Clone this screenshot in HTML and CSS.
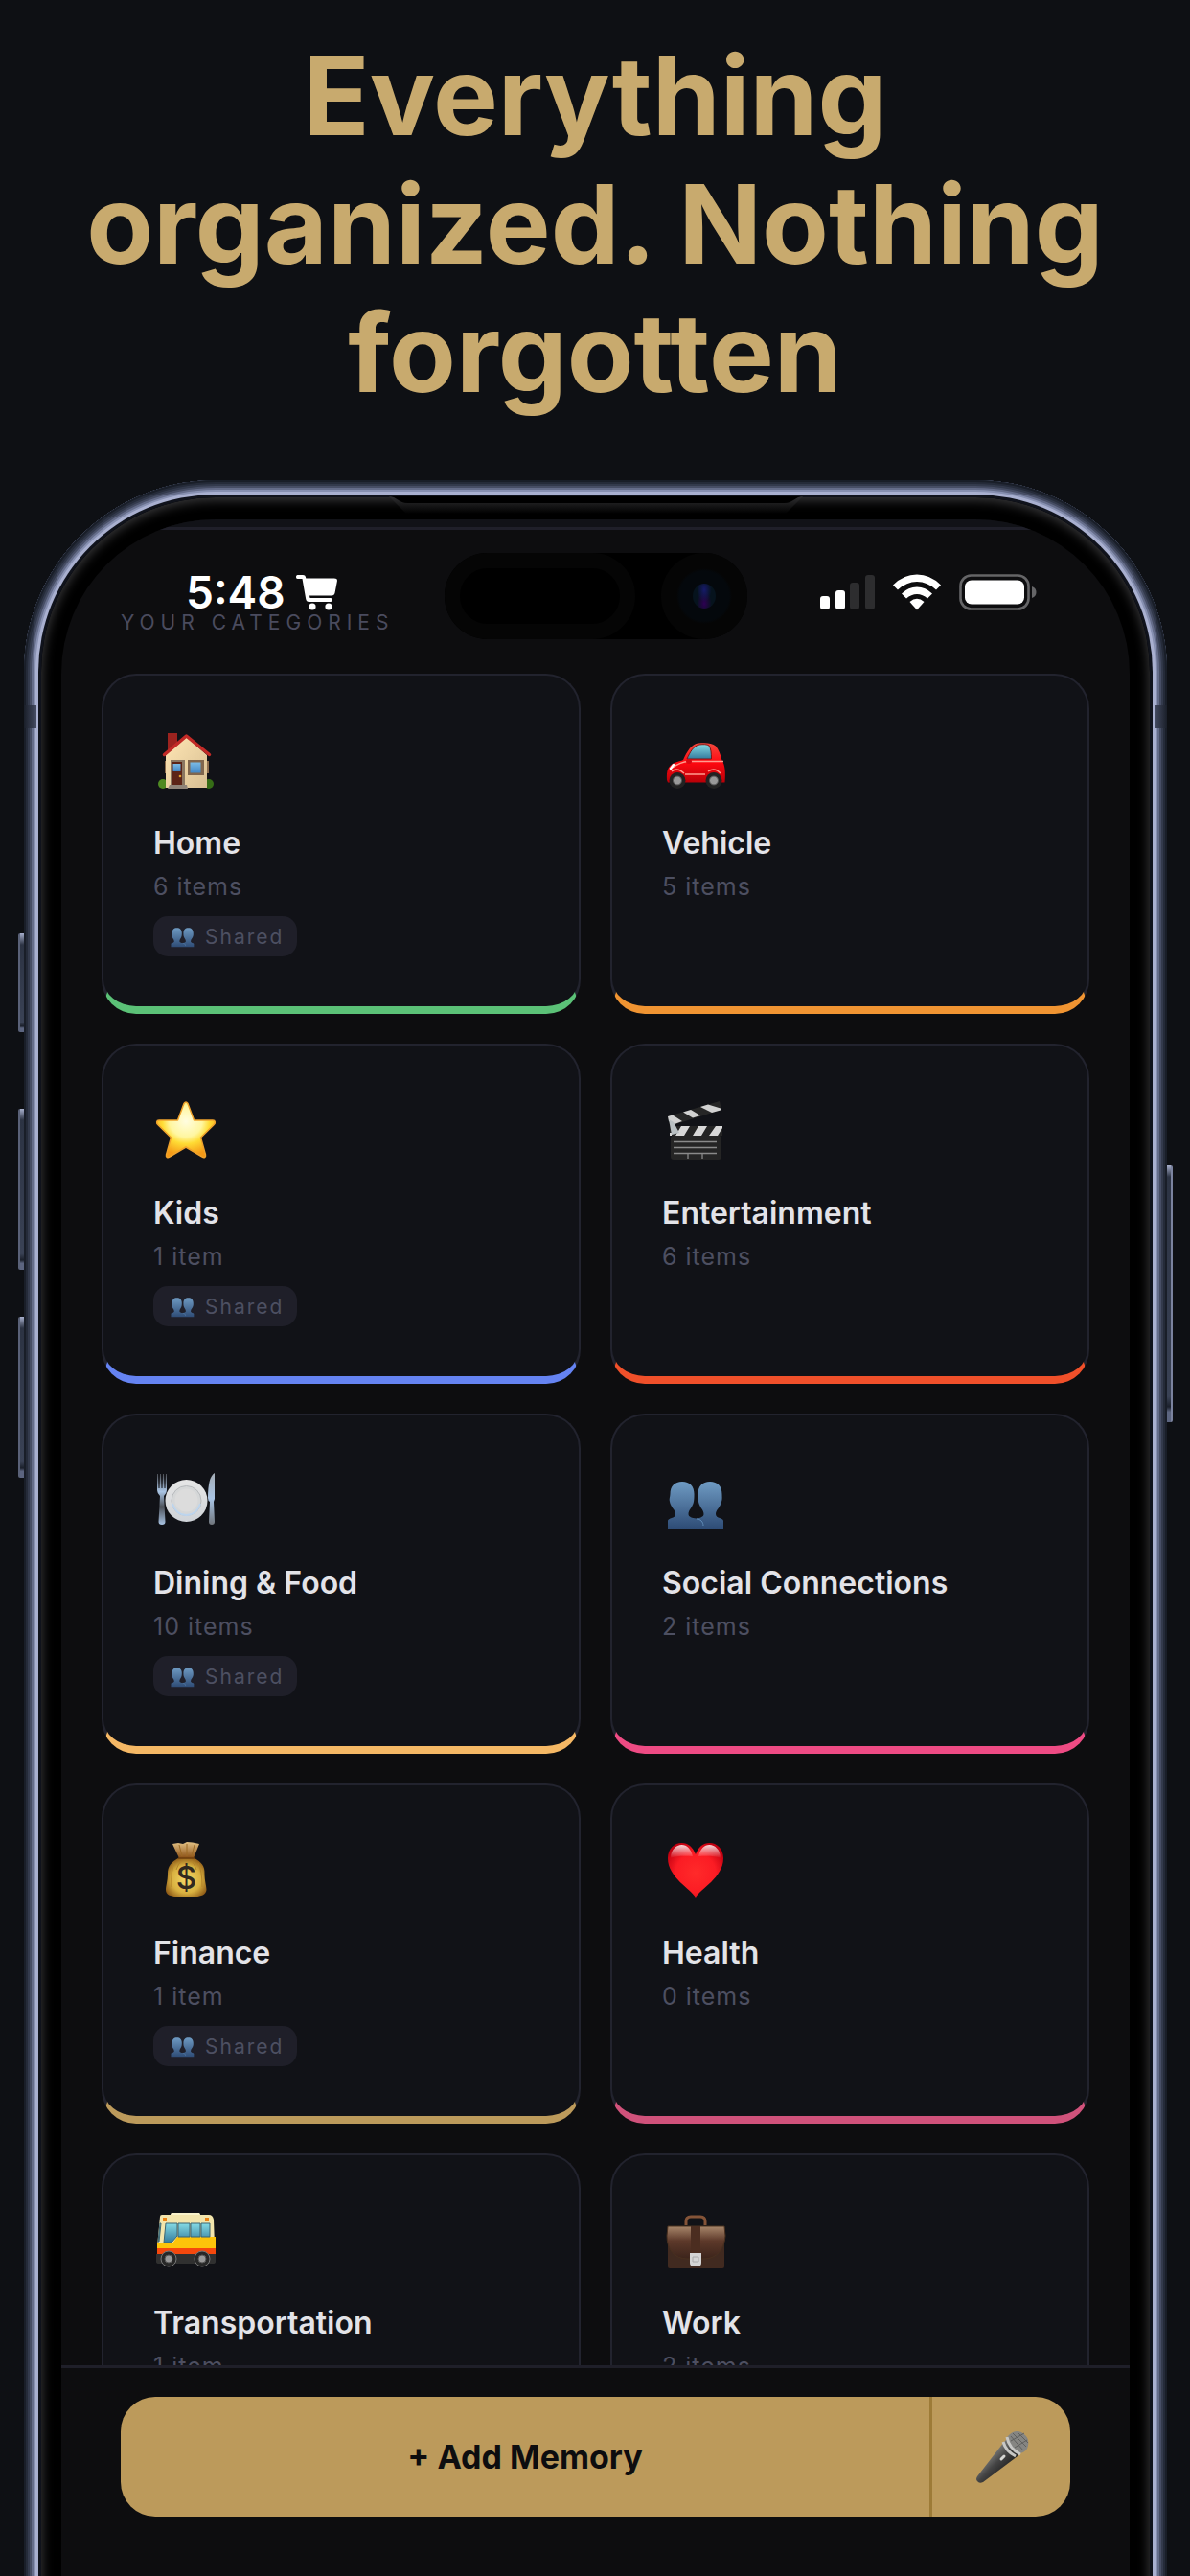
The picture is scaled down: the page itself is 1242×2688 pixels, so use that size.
FILE: index.html
```
<!DOCTYPE html>
<html lang="en">
<head>
    <meta charset="utf-8">
    <meta name="viewport" content="width=device-width, initial-scale=1">
    <title>Your Categories</title>
    <link rel="stylesheet" href="styles.css">
</head>
<body>
    <!-- shared gradients and symbols -->
    <svg class="defs" width="0" height="0" aria-hidden="true">
        <defs>
            <linearGradient id="wall" x1="0" y1="0" x2="1" y2="1"><stop offset="0" stop-color="#ffe6b4"/><stop offset="1" stop-color="#d8bf93"/></linearGradient>
            <linearGradient id="glass" x1="0" y1="0" x2="0" y2="1"><stop offset="0" stop-color="#85dbe5"/><stop offset="1" stop-color="#347b9d"/></linearGradient>
            <linearGradient id="pane" x1="0" y1="0" x2="0" y2="1"><stop offset="0" stop-color="#7bbbe5"/><stop offset="1" stop-color="#4286c4"/></linearGradient>
            <linearGradient id="red" x1="0" y1="0" x2="0" y2="1"><stop offset="0" stop-color="#f4493e"/><stop offset=".5" stop-color="#ff0810"/><stop offset="1" stop-color="#b80008"/></linearGradient>
            <radialGradient id="star" cx=".5" cy=".35" r=".62"><stop offset="0" stop-color="#fffde0"/><stop offset=".45" stop-color="#fff6a0"/><stop offset=".65" stop-color="#ffdc35"/><stop offset="1" stop-color="#f59a17"/></radialGradient>
            <linearGradient id="people-fill" x1="0" y1="0" x2="0" y2="1"><stop offset="0" stop-color="#6f9bc3"/><stop offset="1" stop-color="#2e4c76"/></linearGradient>
            <radialGradient id="bag" cx=".5" cy=".55" r=".6"><stop offset="0" stop-color="#f3d968"/><stop offset=".6" stop-color="#d9b140"/><stop offset="1" stop-color="#8a5514"/></radialGradient>
            <linearGradient id="bag-top" x1="0" y1="0" x2="0" y2="1"><stop offset="0" stop-color="#e3c184"/><stop offset="1" stop-color="#8a4f14"/></linearGradient>
            <radialGradient id="heart" cx=".5" cy=".55" r=".6"><stop offset="0" stop-color="#ff2a2a"/><stop offset=".6" stop-color="#fb1c24"/><stop offset="1" stop-color="#c20010"/></radialGradient>
            <linearGradient id="shine" x1="0" y1="0" x2="0" y2="1"><stop offset="0" stop-color="#fff" stop-opacity=".85"/><stop offset="1" stop-color="#fff" stop-opacity="0"/></linearGradient>
            <linearGradient id="plate" x1="0" y1="0" x2="0" y2="1"><stop offset="0" stop-color="#e6e6e6"/><stop offset="1" stop-color="#cfd3d8"/></linearGradient>
            <linearGradient id="steel" x1="0" y1="0" x2="0" y2="1"><stop offset="0" stop-color="#4c4f55"/><stop offset=".35" stop-color="#a9c4e4"/><stop offset=".65" stop-color="#4b5058"/><stop offset="1" stop-color="#a9c4e4"/></linearGradient>
            <linearGradient id="knife" x1="0" y1="0" x2="0" y2="1"><stop offset="0" stop-color="#a3abb4"/><stop offset=".5" stop-color="#a9c4e4"/><stop offset="1" stop-color="#70757c"/></linearGradient>
            <linearGradient id="leather" x1="0" y1="0" x2="0" y2="1"><stop offset="0" stop-color="#a8876b"/><stop offset=".45" stop-color="#5d392a"/><stop offset="1" stop-color="#3c241b"/></linearGradient>
            <linearGradient id="bezel-glow" x1="0" y1="0" x2="0" y2="1"><stop offset="0" stop-color="#303032"/><stop offset="1" stop-color="#000"/></linearGradient>
            <linearGradient id="mic-body" x1="0" y1="0" x2="1" y2="1"><stop offset=".3" stop-color="#8a8a88"/><stop offset=".5" stop-color="#444"/><stop offset=".75" stop-color="#161616"/></linearGradient>
        </defs>
        <symbol id="people" viewBox="0 0 68 68">
            <path fill="url(#people-fill)" d="M21 15c8 0 12.500 5 12.500 13 0 3 0 5-.5 8-1 6-5.500 8-5.500 13 0 3 4 4 8 4.500 4-.5 8-1.500 8-4.500 0-5-4.500-7-5.500-13-.5-3-.5-5-.5-8 0-8 4.500-13 12.500-13s12.500 5 12.500 13c0 3 .5 5-.5 8-1 6-6 8-6 13 0 5 8 3.500 8 7v8H6v-8c0-3.500 8-2 8-7 0-5-5-7-6-13-1-3 .5-5 .5-8 0-8 4.500-13 12.500-13z"/>
            <path fill="none" stroke="#5f8cb8" stroke-width="1" d="M36 54c4 0 7 3 7 7"/>
        </symbol>
    </svg>

    <div class="page">
        <h1 class="headline">Everything organized. Nothing forgotten</h1>

        <div class="phone">
            <span class="side-button action"></span>
            <span class="side-button volume-up"></span>
            <span class="side-button volume-down"></span>
            <span class="side-button power"></span>
            <span class="antenna left"></span>
            <span class="antenna right"></span>

            <div class="bezel">
                <svg class="speaker" width="432" height="18" viewBox="0 0 432 18" aria-hidden="true">
                    <path fill="url(#bezel-glow)" d="M0 0c8 0 10 7 20 7h392c10 0 12-7 20-7l-18 18H18z"/>
                    <path fill="#000" d="M0 0c8 0 10 7 20 7h392c10 0 12-7 20-7z"/>
                </svg>

                <div class="screen">
                    <div class="status-bar">
                        <div class="status-left">
                            <span class="time">5:48</span>
                            <svg width="44" height="38" viewBox="0 0 44 38" fill="#fff" aria-hidden="true">
                                <path d="M1.500 1H7c2 0 3 1 3.300 3.500h29.500c2.500 0 3.400 1 3.100 3l-2.300 12c-.4 2-1.500 3-3.500 3H14l.5 2.500H36c2.400 0 2.400 4 0 4H13.500c-2 0-3-1-3.300-3L6.500 5h-5c-2 0-2-4 0-4z"/>
                                <circle cx="17" cy="34" r="3.600"/><circle cx="34" cy="34" r="3.600"/>
                            </svg>
                        </div>
                        <div class="island">
                            <span class="sensor"></span>
                            <span class="camera"><span class="lens"></span></span>
                        </div>
                        <div class="status-right">
                            <svg width="57" height="38" viewBox="0 0 57 38" fill="#fff" aria-hidden="true">
                                <rect x="0" y="23" width="10" height="14" rx="3"/>
                                <rect x="16" y="17" width="10" height="20" rx="3"/>
                                <rect x="31" y="9" width="10" height="28" rx="3" fill="#2d2d2f"/>
                                <rect x="47" y="1" width="10" height="36" rx="3" fill="#2d2d2f"/>
                            </svg>
                            <svg width="50" height="38" viewBox="0 0 50 38" fill="#fff" aria-hidden="true">
                                <path d="M0 11.500Q11 .5 25 .5t25 11l-5 5Q36 8 25 8T5 16.500z"/>
                                <path d="M9 20.500Q16 13.500 25 13.500t16 7l-5 5Q31 21 25 21t-11 4.500z"/>
                                <path d="M17.500 29Q25 22.500 32.500 29L25 37.500z"/>
                            </svg>
                            <svg width="81" height="38" viewBox="0 0 81 38" aria-hidden="true">
                                <rect x="1.500" y="1.500" width="71" height="35" rx="11" fill="none" stroke="#656567" stroke-width="2.600"/>
                                <rect x="6" y="6.500" width="62" height="25" rx="7" fill="#fff"/>
                                <path d="M76 13c6 1.500 6 10.500 0 12z" fill="#656567"/>
                            </svg>
                        </div>
                    </div>

                    <main class="content">
                        <h2 class="section-label">YOUR CATEGORIES</h2>
                        <div class="grid">
                            <a class="card green" href="#">
                                <svg class="icon" viewBox="0 0 68 68" aria-hidden="true">
                                    <circle cx="10" cy="59" r="5" fill="#4f8a22"/><circle cx="58" cy="59" r="5" fill="#356c16"/>
                                    <path fill="#9c231f" d="M15 6h10v10L15 24z"/>
                                    <path fill="#8c6c4d" d="M12 35h3v13h-3zM55 35h3v13h-3z"/>
                                    <path fill="url(#wall)" d="M13 29L34.500 10 56 29v34H13z"/>
                                    <path fill="none" stroke="#c22a27" stroke-width="3.500" stroke-linecap="round" stroke-linejoin="round" d="M11.500 28.500L34.500 9l24 19.500"/>
                                    <path fill="#8a7661" d="M18 34h15v26H18z"/><path fill="#5c2417" d="M19 36h11v24H19z"/>
                                    <path fill="url(#pane)" d="M20.500 38h8v8h-8z"/><circle cx="28" cy="51" r="1.300" fill="#e0a030"/>
                                    <path fill="#80664d" d="M36 34h17v16H36z"/><path fill="url(#pane)" d="M38.500 36.500h11v11h-11z"/>
                                    <path fill="#8f8479" d="M17 60h18l1 4H15z"/>
                                </svg>
                                <span class="name">Home</span>
                                <span class="count">6 items</span>
                                <span class="badge"><svg class="badge-icon"><use href="#people"/></svg>Shared</span>
                            </a>
                            <a class="card orange" href="#">
                                <svg class="icon" viewBox="0 0 68 68" aria-hidden="true">
                                    <path fill="url(#red)" d="M5 55c-.5-10 1-15 8-18 4-1.500 7-2 9-3 4-9 9-17 16-17.500 7-.8 14-.5 18 3 3 3.500 5 9 6.500 15 3 4 4 12 3 23H6z"/>
                                    <path fill="url(#glass)" stroke="#7d1512" d="M26 33c3-7 7-14 13-15 4-.5 8-.5 10 1 2 3 2.500 8 2.500 14z"/>
                                    <path fill="none" stroke="#ff9c8f" stroke-width="1.400" d="M11 42q8-6 17-6.500h36M10 46q6-5 13 2M48 46q7-5 13 2M24 49h21"/>
                                    <path stroke="#fff" stroke-width="2.500" stroke-linecap="round" d="M9 43l3-4"/>
                                    <ellipse cx="28" cy="35.500" rx="3" ry="2.500" fill="#d90710"/>
                                    <g fill="#222"><circle cx="16" cy="55.500" r="8.500"/><circle cx="54" cy="55.500" r="8.500"/></g>
                                    <g fill="#999" stroke="#555"><circle cx="16" cy="55.500" r="4.500"/><circle cx="54" cy="55.500" r="4.500"/></g>
                                </svg>
                                <span class="name">Vehicle</span>
                                <span class="count">5 items</span>
                            </a>
                            <a class="card blue" href="#">
                                <svg class="icon" viewBox="0 0 68 68" aria-hidden="true">
                                    <path fill="url(#star)" stroke="#f0a22c" stroke-width="1.500" stroke-linejoin="round" d="M32 6.500q2-3 4 0L42.500 24H62c3 0 3 3 1 4.800L49.500 42l5 18c.5 2.500-1.500 3.500-3.500 2L34 52 17 62c-2 1.500-4 .5-3.500-2l5-18L5 28.800C3 27 3 24 6 24h19.500z"/>
                                </svg>
                                <span class="name">Kids</span>
                                <span class="count">1 item</span>
                                <span class="badge"><svg class="badge-icon"><use href="#people"/></svg>Shared</span>
                            </a>
                            <a class="card red" href="#">
                                <svg class="icon" viewBox="0 0 68 68" aria-hidden="true">
                                    <path fill="#262626" d="M6 20L60 4l2 9L8 30z"/>
                                    <path fill="#d2d2d2" d="M6 20l5-1.500 10 6.500-8 3-6-3zM22 15.500l8-2.500 10 6-8 2.500zM40 10l8-2.500 13 4v2l-9 2.500z"/>
                                    <path fill="#242424" d="M8 30h55v10H8z"/>
                                    <path fill="#d8d8d8" d="M20 30h9l-6 10h-9zM38 30h9l-6 10h-9zM56 30h7v2l-5 8h-9zM8 37h2v3H8z"/>
                                    <path fill="#b9c0c3" d="M7 23l5 3 6 11-8 2z"/>
                                    <rect x="9" y="40" width="53" height="25" rx="3" fill="#252525"/>
                                    <path stroke="#8a8a8a" stroke-width="1.300" d="M12 46.500h45M12 52.500h45M12 58.500h45M27 59v5M42 59v5"/>
                                </svg>
                                <span class="name">Entertainment</span>
                                <span class="count">6 items</span>
                            </a>
                            <a class="card peach" href="#">
                                <svg class="icon" viewBox="0 0 68 68" aria-hidden="true">
                                    <path fill="url(#steel)" d="M4 7h1l.5 15h1L7 7h1l.5 15h1L10 7h1l.5 15h1L13 7h1v17q0 3-3 6l1.500 27q0 3-3.500 3t-3.500-3L7 30q-3-3-3-6z"/>
                                    <circle cx="34.500" cy="35" r="22" fill="url(#plate)"/>
                                    <circle cx="34.500" cy="35" r="15.500" fill="#d5d7d8" stroke="#b7babd"/>
                                    <path fill="none" stroke="#bdd5ee" stroke-width="1.800" d="M20 38q4 12 14.500 12T49 38"/>
                                    <circle cx="34.500" cy="34.500" r="12" fill="#dcdcdc"/>
                                    <path fill="url(#knife)" d="M64 6v27l-1 3 1 21q0 3-3 3t-3-3l1-21q-2-1-2-4 0-22 7-26z"/>
                                </svg>
                                <span class="name">Dining &amp; Food</span>
                                <span class="count">10 items</span>
                                <span class="badge"><svg class="badge-icon"><use href="#people"/></svg>Shared</span>
                            </a>
                            <a class="card pink" href="#">
                                <svg class="icon"><use href="#people"/></svg>
                                <span class="name">Social Connections</span>
                                <span class="count">2 items</span>
                            </a>
                            <a class="card gold" href="#">
                                <svg class="icon" viewBox="0 0 68 68" aria-hidden="true">
                                    <path fill="url(#bag-top)" d="M20 7l6-1 5 1 4-2 6 .5 7 1.500-6 15H27z"/>
                                    <path fill="none" stroke="#9c6a24" d="M27 8l3 12M35 7v13M43 8l-3 12"/>
                                    <path fill="url(#bag)" d="M26 22h17c7 4 11 8 10.500 16 0 8 2 13 2 17-.5 5-6 7-11 7H24c-6 0-11-2-11-7 0-4 2-9 2-17C15 30 19 26 26 22z"/>
                                    <path fill="none" stroke="#b48429" d="M22 27q-4 8-3 25M29 25q-3 3-5 9M47 27q4 8 4 25M40 25q3 3 5 9"/>
                                    <path stroke="#6d3e0e" stroke-width="1.500" d="M26 22h17"/>
                                    <text class="dollar" x="34.500" y="54" text-anchor="middle">$</text>
                                </svg>
                                <span class="name">Finance</span>
                                <span class="count">1 item</span>
                                <span class="badge"><svg class="badge-icon"><use href="#people"/></svg>Shared</span>
                            </a>
                            <a class="card rose" href="#">
                                <svg class="icon" viewBox="0 0 68 68" aria-hidden="true">
                                    <path fill="url(#heart)" d="M35 63C30 54 6 42 6 22 6 12 13 6 20.500 6 27 6 32 10 35 18 38 10 43 6 49.500 6 57 6 64 12 64 22c0 20-24 32-29 41z"/>
                                    <path fill="url(#shine)" d="M9 22c0-9 6-14 11.500-14C26 8 30 12 32 20c-6 0-16-1-23 2zM38 20c2-8 6-12 11.500-12C55 8 61 13 61 22c-7-3-17-2-23-2z"/>
                                </svg>
                                <span class="name">Health</span>
                                <span class="count">0 items</span>
                            </a>
                            <a class="card green" href="#">
                                <svg class="icon" viewBox="0 0 68 68" aria-hidden="true">
                                    <path fill="#f3e5ac" d="M7 10q0-2 2-2h9l1-2h29l1 2h9q4 0 5 5l1 28H4z"/>
                                    <path fill="#f9f2ca" d="M18 8l1-2h29l1 2z"/>
                                    <path fill="#fdc40a" d="M4 38h16l5-7h40v12H4z"/>
                                    <path fill="#f5480d" d="M4 43h61v6H4z"/>
                                    <path fill="#303030" d="M3 49h62v8q0 2-3 2H6q-3 0-3-2z"/>
                                    <path fill="url(#glass)" stroke="#3e6570" d="M13 17h12v13l-6 7h-8zM26 17h12v14H26zM39 17h10v14H39zM50 17h9v14h-9zM8 17h-1L5 36h1z"/>
                                    <path fill="#ee8415" d="M10 11h4v4h-4zM54 11h4v4h-4z"/>
                                    <g fill="#272727" stroke="#777"><circle cx="16" cy="54" r="8"/><circle cx="51" cy="54" r="8"/></g>
                                    <g fill="#999" stroke="#555"><circle cx="16" cy="54" r="4"/><circle cx="51" cy="54" r="4"/></g>
                                </svg>
                                <span class="name">Transportation</span>
                                <span class="count">1 item</span>
                            </a>
                            <a class="card blue" href="#">
                                <svg class="icon" viewBox="0 0 68 68" aria-hidden="true">
                                    <path fill="none" stroke="#855438" stroke-width="3" d="M25 19v-4q0-5 5-5h10q5 0 5 5v4"/>
                                    <path fill="#412a20" d="M6 36h59v26q0 2-2 2H8q-2 0-2-2z"/>
                                    <path fill="url(#leather)" stroke="#49301f" d="M6 20h59l1 10c-1 14-9 24-22 24H26C13 54 5 44 5 30z"/>
                                    <path fill="#4b2d20" d="M30 20h10v28H30z"/>
                                    <path fill="#d5d5d5" d="M29 48h12v10q0 4-4 4h-4q-4 0-4-4z"/>
                                    <path fill="none" stroke="#aaa" d="M32 52h6v5h-6z"/>
                                </svg>
                                <span class="name">Work</span>
                                <span class="count">2 items</span>
                            </a>
                        </div>
                    </main>

                    <div class="bottom-bar">
                        <div class="actions">
                            <button type="button" class="add-button">+ Add Memory</button>
                            <button type="button" class="mic-button" aria-label="Record">
                                <svg width="68" height="68" viewBox="0 0 68 68" aria-hidden="true">
                                    <path fill="url(#mic-body)" d="M42 13l14 13-5 7-36 27q-4 2-6-1-2-2 0-5l28-36z"/>
                                    <path fill="#858582" d="M42 11q6-6 13-3 9 5 7 14-1 6-8 8-12-6-14-17z"/>
                                    <path stroke="#c8c8c6" stroke-width="3" fill="none" d="M40 13q2 12 14 18M36 18q3 10 13 15"/>
                                    <path stroke="#60605e" stroke-width="1" d="M46 9l14 14M51 8l11 11M44 17l14-8M48 24l13-8M44 12l13 15"/>
                                    <path stroke="#d5d5d3" stroke-width="3" stroke-linecap="round" d="M34 36l3-3"/>
                                </svg>
                            </button>
                        </div>
                    </div>
                </div>
            </div>
        </div>
    </div>
</body>
</html>
```
FILE: styles.css
```
* {
    box-sizing: border-box;
}
body {
    margin: 0;
    background: #0e1014;
    font-family: Inter, "Liberation Sans", sans-serif;
    color: #e3e3e8;
}
.defs {
    position: absolute;
}
.page {
    display: flex;
    flex-direction: column;
    height: 100vh;
    overflow: hidden;
}
.headline {
    margin: 0;
    padding: 33px 48px 66px;
    font-size: 114px;
    line-height: 134px;
    font-weight: 700;
    text-align: center;
    color: #c8aa6e;
}

/* phone frame, its lower edge runs off the page */
.phone {
    position: relative;
    display: flex;
    flex: 1;
    min-height: 0;
    margin: 0 24px -16px 25px;
    padding: 15px 15px 0;
    border-radius: 200px 200px 0 0;
    background: #a9b0d0;
    box-shadow:
        inset 0 0 0 2px #191e28,
        inset 0 0 0 4px #252b39,
        inset 0 0 0 6px #333a4c,
        inset 0 0 0 8px #474e65,
        inset 0 0 0 10px #656d8a,
        inset 0 0 0 12px #8790b1;
}
.side-button {
    position: absolute;
    left: -6px;
    width: 6px;
    height: 168px;
    border-left: 2px solid #596178;
    border-radius: 2px 0 0 2px;
    background: linear-gradient(#a7afcc, #2c3343 12px, #3a4255 90%, #1b202b 94%, #5c6580 96%);
}
.action {
    top: 473px;
    height: 103px;
}
.volume-up {
    top: 656px;
}
.volume-down {
    top: 873px;
}
.power {
    top: 715px;
    left: auto;
    right: -6px;
    height: 268px;
    border-left: 0;
    border-right: 2px solid #7b839f;
    border-radius: 0 2px 2px 0;
}
.antenna {
    position: absolute;
    top: 235px;
    width: 13px;
    height: 24px;
    background: linear-gradient(to right, #191e28, #454c63);
}
.antenna.left {
    left: 0;
}
.antenna.right {
    right: 0;
    background: linear-gradient(to left, #191e28, #454c63);
}
.bezel {
    position: relative;
    display: flex;
    flex: 1;
    min-width: 0;
    padding: 23px 21px 0;
    border: 3px solid #10131c;
    border-bottom: 0;
    border-radius: 185px 185px 0 0;
    background: #000;
    box-shadow: inset 0 2px 12px 1px #3a3a3c;
}
.speaker {
    position: absolute;
    top: -1px;
    left: 50%;
    margin-left: -216px;
}
.screen {
    position: relative;
    display: flex;
    flex: 1;
    flex-direction: column;
    min-width: 0;
    overflow: hidden;
    border-radius: 161px 161px 0 0;
    background: #0d0d0f;
}

/* status bar sits over the scrolled content */
.status-bar {
    position: absolute;
    top: 35px;
    left: 0;
    right: 0;
    display: grid;
    grid-template-columns: 1fr 316px 1fr;
    height: 90px;
}
.status-left,
.status-right {
    display: flex;
    align-items: center;
    padding-bottom: 8px;
}
.status-left {
    gap: 11px;
    padding-left: 130px;
}
.status-right {
    justify-content: flex-end;
    gap: 19px;
    padding-right: 97px;
}
.time {
    font-size: 46px;
    line-height: 46px;
    font-weight: 600;
    color: #fff;
}
.island {
    display: flex;
    justify-content: space-between;
    border-radius: 45px;
    background: #000;
}
.sensor {
    width: 199px;
    border: 16px solid #050505;
    border-radius: 45px;
}
.camera {
    display: flex;
    align-items: center;
    justify-content: center;
    width: 90px;
    border-radius: 50%;
    background: radial-gradient(#04080c 26px, #050505 29px);
}
.lens {
    width: 24px;
    height: 26px;
    border-radius: 50%;
    background: radial-gradient(ellipse at 50% 25%, #171a6a, transparent 45%), radial-gradient(ellipse at 50% 80%, #2d0052, transparent 45%), #06131d;
}

/* categories */
.content {
    flex: 1;
    min-height: 0;
    overflow: hidden;
    border-top: 8px solid #111217;
}
.section-label {
    margin: 0;
    padding: 84px 62px 40px;
    border-top: 3px solid #1f1f29;
    font-size: 21px;
    line-height: 26px;
    font-weight: 400;
    letter-spacing: 6px;
    color: #4a4b5e;
}
.grid {
    display: grid;
    grid-template-columns: 1fr 1fr;
    gap: 31px;
    padding: 0 42px;
}
.card {
    display: flex;
    flex-direction: column;
    align-items: flex-start;
    min-height: 355px;
    padding: 54px 52px 40px;
    border: 2px solid #22232e;
    border-bottom-width: 8px;
    border-radius: 36px;
    background: #111217;
    color: inherit;
    text-decoration: none;
}
.green {
    border-bottom-color: #5bc177;
}
.orange {
    border-bottom-color: #f09432;
}
.blue {
    border-bottom-color: #6583f2;
}
.red {
    border-bottom-color: #f0502a;
}
.peach {
    border-bottom-color: #f5b865;
}
.pink {
    border-bottom-color: #ee4b84;
}
.gold {
    border-bottom-color: #bc9a5b;
}
.rose {
    border-bottom-color: #d0527b;
}
.icon {
    width: 68px;
    height: 68px;
}
.dollar {
    font-size: 33px;
    font-weight: 500;
    fill: #30291f;
}
.name {
    margin-top: 33px;
    font-size: 32px;
    line-height: 40px;
    font-weight: 600;
}
.count {
    margin-top: 9px;
    font-size: 25px;
    line-height: 32px;
    letter-spacing: 1px;
    color: #4d4f61;
}
.badge {
    display: flex;
    align-items: center;
    gap: 9px;
    height: 42px;
    margin-top: 15px;
    padding: 0 14px 0 15px;
    border-radius: 15px;
    background: #1f1f29;
    font-size: 21px;
    letter-spacing: 2px;
    color: #4d5062;
}
.badge-icon {
    width: 30px;
    height: 30px;
    padding-bottom: 2px;
}

/* bottom bar */
.bottom-bar {
    height: 236px;
    padding: 30px 62px 0;
    border-top: 3px solid #1f1f29;
    background: #0d0d0f;
}
.actions {
    display: flex;
    height: 125px;
    overflow: hidden;
    border-radius: 36px;
    background: #bc9a5b;
}
.actions button {
    border: 0;
    background: none;
    color: #0d0d0f;
    font-family: inherit;
    font-size: 34px;
    font-weight: 700;
    cursor: pointer;
}
.actions .add-button {
    flex: 1;
}
.actions .mic-button {
    display: flex;
    align-items: center;
    justify-content: center;
    width: 147px;
    padding: 0;
    border-left: 3px solid #9d7b37;
}
```
